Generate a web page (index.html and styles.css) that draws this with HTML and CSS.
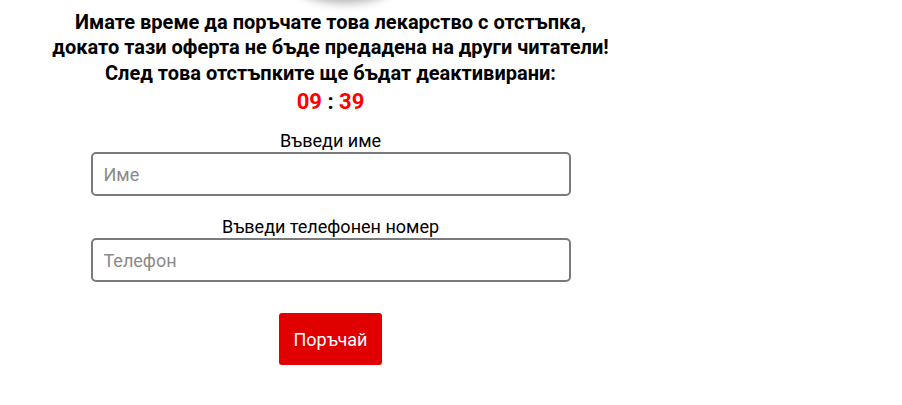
FILE: index.html
```html
<!DOCTYPE html>
<html lang="bg">
<head>
	<meta charset="UTF-8">
	<title>Поръчка</title>
	<link rel="stylesheet" href="styles.css">
</head>
<body>
<div class="order">
    <div class="order-shadow"></div>
    <p class="order-title">Имате време да поръчате това лекарство с отстъпка,<br>докато тази оферта не бъде предадена на други читатели!</p>
    <p class="order-sub">След това отстъпките ще бъдат деактивирани:</p>
    <p class="timer"><span class="timer-num">09</span> : <span class="timer-num">39</span></p>
    <form class="order-form" action="javascript:;">
        <label class="field">
            <span class="field-label">Въведи име</span>
            <input class="field-input" type="text" placeholder="Име">
        </label>
        <label class="field">
            <span class="field-label">Въведи телефонен номер</span>
            <input class="field-input" type="tel" placeholder="Телефон">
        </label>
        <button class="order-btn" type="submit">Поръчай</button>
    </form>
</div>
</body>
</html>
```

FILE: styles.css
```css
*
{
    margin: 0;
    padding: 0;
    box-sizing: border-box;
}
body
{
    font-family: Roboto, "Noto Sans", sans-serif;
    color: #000;
    background: #fff;
}
.order
{
    position: relative;
    display: flex;
    flex-direction: column;
    align-items: center;
    width: 661px;
    padding-top: 10px;
}
.order-shadow
{
    position: absolute;
    top: -40px;
    left: 295px;
    width: 100px;
    height: 40px;
    border-radius: 50%;
    box-shadow: 0 3px 10px rgba(0,0,0,.3);
}
.order-title
{
    font-size: 20px;
    font-weight: bold;
    line-height: 25px;
    text-align: center;
}
.order-sub
{
    margin-top: 1px;
    font-size: 20px;
    font-weight: bold;
    line-height: 25px;
    text-align: center;
}
.timer
{
    margin-top: 2px;
    font-size: 22px;
    font-weight: bold;
    line-height: 28px;
}
.timer-num
{
    color: #f00;
}
.order-form
{
    display: flex;
    flex-direction: column;
    align-items: center;
    margin-top: 13px;
}
.field
{
    display: flex;
    flex-direction: column;
    align-items: center;
    margin-bottom: 19px;
}
.field-label
{
    font-size: 18px;
    line-height: 23px;
}
.field-input
{
    width: 480px;
    height: 44px;
    padding: 0 11px;
    font-family: Roboto, sans-serif;
    font-size: 18px;
    color: #333;
    border: 2px solid #7a7a7a;
    border-radius: 5px;
    outline: none;
}
.field-input::placeholder
{
    color: #8a8a8a;
}
.order-btn
{
    margin-top: 12px;
    width: 103px;
    height: 52px;
    font-family: Roboto, sans-serif;
    font-size: 18px;
    color: #fff;
    background: #e00000;
    border: none;
    border-radius: 3px;
    cursor: pointer;
}
```
